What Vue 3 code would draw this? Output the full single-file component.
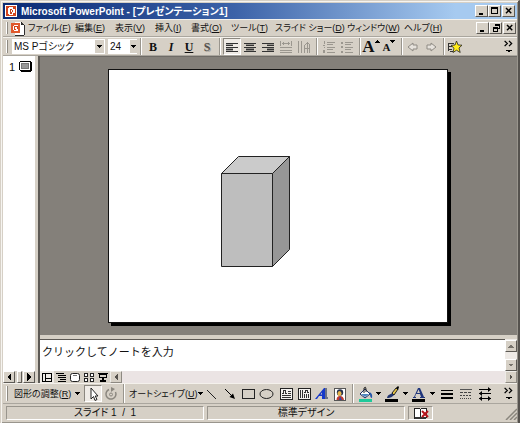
<script setup>
import { h, ref } from 'vue'

const art = {
  logo: '<path d="M1 1h13v13H1z" fill="#fff"/><path d="M2 2h11v11H2z" fill="#d2451e"/><path d="M5 3h5v2h2v5h-2v2H5v-1H4V4h1z" fill="#fff"/><path d="M6 5h3v1h1v3H8v2H6z" fill="#c2401c"/><path d="M7 6h2v2H7z" fill="#fff"/>',
  doc: '<path d="M5 1h7l3 3v11H5z" fill="#fff"/><path d="M12 1l3 3v11H5M12 1v3h3" fill="none" stroke="#222"/><path d="M1 2h10v11H1z" fill="#e0592c"/><path d="M4 4h4v1h1v5H8v1H4v-1H3V5h1z" fill="#fff"/><path d="M4 5h4v4H6v1H4z" fill="#d2451e"/><path d="M5 6h2v2H5z" fill="#fff"/>',
  min: '<path d="M4 11h5v2H4z"/>',
  max: '<path d="M3 3h9v9H3zM4 5v6h7V5z" fill-rule="evenodd"/>',
  restore: '<path d="M6 3h7v6h-3v4H4V7h2zM7 5v2h3v1h2V5zM5 9v3h4V9z" fill-rule="evenodd"/>',
  close: '<path d="M4 4l7 7M11 4l-7 7" stroke="#000" stroke-width="2" shape-rendering="auto"/>',
  left: '<g fill="#333"><path d="M2 4h12v1H2zM2 6h7v1H2zM2 8h12v1H2zM2 10h7v1H2zM2 12h12v1H2z"/><path d="M2 5h7v1H2zM2 9h7v1H2zM2 11h7v1H2z" opacity=".4"/></g>',
  center: '<g fill="#333"><path d="M2 4h12v1H2zM4 6h8v1H4zM2 8h12v1H2zM4 10h8v1H4zM2 12h12v1H2z"/><path d="M4 5h8v1H4zM4 9h8v1H4zM4 11h8v1H4z" opacity=".4"/></g>',
  right: '<g fill="#333"><path d="M2 4h12v1H2zM7 6h7v1H7zM2 8h12v1H2zM7 10h7v1H7zM2 12h12v1H2z"/><path d="M7 5h7v1H7zM7 9h7v1H7zM7 11h7v1H7z" opacity=".4"/></g>',
  spread: '<g fill="#9b978f"><path d="M2 2h1v5H2zM13 2h1v5h-1zM4 4h8v1H4zM5 3h1v3H5zM10 3h1v3h-1zM2 8h12v1H2zM2 11h12v1H2zM2 13h12v1H2z"/></g>',
  vertical: '<g fill="#9b978f"><path d="M2 2h1v12H2zM5 2h1v12H5zM8 6h1v8H8zM11 3h1v11h-1zM9 5h1v1H9zM13 5h1v9h-1zM10 4h3v1h-3zM8 9h6v1H8z"/></g>',
  numbers: '<g fill="#9b978f"><path d="M3 2h1v3H3zM2 6h2v1H2zM3 8h1v1H3zM2 11h2v3H2zM6 3h8v1H6zM6 5h6v1H6zM6 8h8v1H6zM6 10h6v1H6zM6 13h8v1H6z"/></g>',
  bullets: '<g fill="#9b978f"><path d="M2 3h2v2H2zM2 7h2v2H2zM2 12h2v2H2zM6 3h8v1H6zM6 5h6v1H6zM6 8h8v1H6zM6 10h6v1H6zM6 13h8v1H6z"/></g>',
  back: '<path d="M3 8l5-4v2h4v4H8v2z" fill="#e6e2dc" stroke="#8f8b84" shape-rendering="auto"/>',
  next: '<path d="M13 8L8 4v2H4v4h4v2z" fill="#e6e2dc" stroke="#8f8b84" shape-rendering="auto"/>',
  star: '<path d="M1 4h6M1 4v8M1 7h5M1 10h4M3 12h3" stroke="#333"/><path d="M9.500 2l1.600 4 3.900.200-3 2.800 1.200 4.500-3.700-2.300L6 13.500l1-4.300-3-2.800 4-.400z" fill="#ffec1a" stroke="#222" stroke-width=".8" shape-rendering="auto"/>',
  cursor: '<path d="M6 2v11l2.500-2.500L10 14.500l2-1-1.800-3.500H13z" fill="#fff" stroke="#222" shape-rendering="auto"/>',
  rotate: '<g shape-rendering="auto" fill="none" stroke="#8b877f"><path d="M6 3.500a5 5 0 1 0 6.500 2.500" stroke-width="1.500"/><path d="M8 1l4 2-4 3z" fill="#8b877f" stroke="none"/><circle cx="8" cy="8.500" r="1.500"/></g>',
  line: '<path d="M3 4l9 9" stroke="#222" shape-rendering="auto"/>',
  arrow: '<g shape-rendering="auto"><path d="M3 3l8 8" stroke="#000"/><path d="M13 13L7.500 11 11 7.500z"/></g>',
  rect: '<path d="M2.500 3.500h12v9h-12z" fill="none" stroke="#222"/>',
  oval: '<ellipse cx="8.500" cy="8" rx="6.500" ry="4.500" fill="none" stroke="#222" shape-rendering="auto"/>',
  text: '<path d="M2.500 2.500h12v11h-12z" fill="#f4f2ef" stroke="#222"/><path d="M4 7.500h1l1-3h1l1 3h1M10 5.500h3M10 7.500h3M4 9.500h9M4 11.500h9" stroke="#333" fill="none"/>',
  vtext: '<path d="M2.500 2.500h12v11h-12z" fill="#f4f2ef" stroke="#222"/><path d="M4.500 4v8M6.500 4v8M8.500 8v4M10.500 8v4M12.500 8v4M8 6.500h1l1-2h1l1 2h1" stroke="#333" fill="none"/>',
  wordart: '<g shape-rendering="auto"><path d="M1 13L10 2h1v11H8v-3H5l-2 3zM6.500 8.500H8V6.500z" fill="#1739c9"/><path d="M11 2h2v9h1v2h-3z" fill="#6c7284"/></g>',
  clip: '<path d="M2.500 2.500h11v12h-11z" fill="#fff" stroke="#555"/><g shape-rendering="auto"><circle cx="8" cy="6.500" r="3.200" fill="#25304d"/><ellipse cx="7.500" cy="7.500" rx="2" ry="2.500" fill="#e8b54a"/><path d="M4.500 14q0-4 3.500-4t4 4z" fill="#c23b2e"/><path d="M8 10l2 4H7z" fill="#3444a6"/></g>',
  fill: '<path d="M2 13h13v3H2z" fill="#20c99a"/><g shape-rendering="auto"><path d="M3 8l5-5 5 5-5 4z" fill="#fff" stroke="#1d2c62"/><path d="M4 8h8l-4 3z" fill="#4c86bd"/><path d="M7 7V2q2-2 2 1v3" fill="none" stroke="#222"/><path d="M12 6q4 1 3 6-2 0-2-4z" fill="#2455a8"/></g>',
  pen: '<path d="M1 13h13v3H1z"/><g shape-rendering="auto"><path d="M3 12c1-4 3-3 5-5l2 2c-2 2-3 3-7 3" fill="#20346e"/><path d="M8 7l4-5 2 1-4 6z" fill="#e8c546" stroke="#222"/><path d="M12 2l2-2 1 1-1 3z"/></g>',
  font: '<path d="M1 13h13v3H1z"/><path d="M2 11h1l4-9h2l4 9h1v1H9v-1h1l-1-3H5l-1 3h1v1H2zM6 7h3L7.500 3.500z" fill="#20367c" shape-rendering="auto"/>',
  weight: '<path d="M2 4h12v1H2zM2 7h12v2H2zM2 11h12v2H2z"/>',
  dash: '<path d="M2 3.500h12" stroke="#555"/><path d="M2 6.500h12" stroke="#444" stroke-dasharray="3 1"/><path d="M2 9.500h12" stroke="#444" stroke-dasharray="2 1"/><path d="M2 12.500h12" stroke="#444" stroke-dasharray="1 1"/>',
  arrows: '<path d="M2 3h12v1H2zM2 7h12v1H2zM2 12h12v1H2z"/><path d="M11 1l3 2.500L11 6zM5 5L2 7.500 5 10zM5 10l-3 2.500L5 15zM11 10l3 2.500-3 2.500z" shape-rendering="auto"/>',
  more: '<path d="M3 1l3 3-3 3M8 1l3 3-3 3" fill="none" stroke="#000" stroke-width="1.500" shape-rendering="auto"/><path d="M5 11h6v1h-1v1H9v1H7v-1H6v-1H5z"/>',
  normal: '<path d="M1 1h10v9H1zM2 2v7h2V2zM5 2v4h5V2zM5 7v2h5V7z" fill-rule="evenodd"/>',
  outline: '<path d="M1 1h8v1H1zM3 3h8v1H3zM3 5h8v1H3zM5 7h6v1H5zM3 9h8v1H3z"/>',
  slide: '<rect x="1.500" y="1.500" width="9" height="8" rx="2" fill="#fff" stroke="#222" shape-rendering="auto"/><path d="M4 3h4v1H4z" fill="#777"/>',
  sorter: '<path d="M1.500 1.500h3v3h-3zM7.500 1.500h3v3h-3zM1.500 6.500h3v3h-3zM7.500 6.500h3v3h-3z" fill="#fff" stroke="#222"/>',
  show: '<path d="M1 1h10v1H1zM2 2h8v4H2zM3 3v2h6V3zM5 6h2v2h2v2H3V8h2z" fill-rule="evenodd"/>',
  thumb: '<path d="M2 2h12v1h1v10h-1v1H3v-1H2v-1H1V3h1z"/><path d="M2 3h11v9H2z" fill="#fff"/><path d="M3 4h9v7H3z" fill="#777"/><path d="M4 5h7v5H4z" fill="#999"/>',
  aleft: '<path d="M10 4v8L6 8z"/>',
  aright: '<path d="M6 4v8l4-4z"/>',
  aup: '<path d="M4 10h8L8 6z" fill="#77736c"/>',
  adown: '<path d="M4 6h8l-4 4z" fill="#77736c"/>',
  drop: '<path d="M0 0h5v1H4v1H3v1H2V2H1V1H0z"/>',
  tup: '<path d="M0 3h5V2H4V1H3V0H2v1H1v1H0z"/>',
  book: '<path d="M1.500 3.500h5l1 1V13h-6zM8 4l1-1h4v9H8" fill="#fff" stroke="#222"/><path d="M2 12h11v2H2z" fill="#333"/><path d="M9 6l6 6M15 6l-6 6" stroke="#b8141c" stroke-width="2" shape-rendering="auto"/>'
}

const boxes = { drop: [5, 3], tup: [5, 3], normal: [12, 11], outline: [12, 11], slide: [12, 11], sorter: [12, 11], show: [12, 11] }

const Icon = (p) => {
  const [w, t] = boxes[p.name] || [16, 16]
  return h('svg', {
    class: 'icon', viewBox: `0 0 ${w} ${t}`, width: p.size || w, height: p.size || t,
    'shape-rendering': 'crispEdges', 'aria-hidden': 'true', innerHTML: art[p.name]
  })
}
Icon.props = ['name', 'size']

const menus = ['ファイル(F)', '編集(E)', '表示(V)', '挿入(I)', '書式(O)', 'ツール(T)', 'スライド ショー(D)', 'ウィンドウ(W)', 'ヘルプ(H)']
  .map((m) => ({ text: m.slice(0, -3), key: m.slice(-2, -1) }))
const aligns = [['left', '左揃え'], ['center', '中央揃え'], ['right', '右揃え'], ['spread', '均等割り付け'], ['vertical', '文字方向']]
const views = [['normal', '標準'], ['outline', 'アウトライン'], ['slide', 'スライド'], ['sorter', '一覧'], ['show', 'スライド ショー']]
const shapes = [['line', '直線'], ['arrow', '矢印'], ['rect', '四角形'], ['oval', '楕円']]
const objects = [['text', 'テキスト'], ['vtext', '縦書きテキスト'], ['wordart', 'ワードアート'], ['clip', 'クリップアート']]
const colors = [['fill', '塗りつぶしの色'], ['pen', '線の色'], ['font', 'フォントの色']]
const strokes = [['weight', '線のスタイル'], ['dash', '点線のスタイル'], ['arrows', '矢印のスタイル']]
const align = ref('left')
const view = ref('normal')
const notes = ref('クリックしてノートを入力')
</script>

<template>
  <div class="window">
    <header class="title">
      <Icon name="logo" :size="15" />
      <h1>Microsoft PowerPoint - [プレゼンテーション1]</h1>
      <div class="controls">
        <button v-for="c in ['min', 'max', 'close']" :key="c" class="raised" :class="c" :aria-label="c"><Icon :name="c" :size="12" /></button>
      </div>
    </header>

    <nav class="bar menubar">
      <i class="grip"></i>
      <Icon name="doc" :size="15" />
      <div class="menus">
        <button v-for="m in menus" :key="m.key">{{ m.text }}(<u>{{ m.key }}</u>)</button>
      </div>
      <div class="controls">
        <button v-for="c in ['min', 'restore', 'close']" :key="c" class="raised" :class="c" :aria-label="c"><Icon :name="c" :size="12" /></button>
      </div>
    </nav>

    <div class="bar format">
      <i class="grip"></i>
      <label class="combo face"><select aria-label="フォント"><option>MS Pゴシック</option></select><span><Icon name="drop" /></span></label>
      <label class="combo size"><select aria-label="フォント サイズ"><option>24</option></select><span><Icon name="drop" /></span></label>
      <i class="sep"></i>
      <button class="tool letter"><b>B</b></button>
      <button class="tool letter"><em>I</em></button>
      <button class="tool letter"><u>U</u></button>
      <button class="tool letter shade"><b>S</b></button>
      <i class="sep"></i>
      <button v-for="[n, t] in aligns" :key="n" class="tool" :class="{ pressed: align === n }" :aria-label="t" @click="align = n"><Icon :name="n" /></button>
      <i class="sep"></i>
      <button class="tool" aria-label="段落番号"><Icon name="numbers" /></button>
      <button class="tool" aria-label="箇条書き"><Icon name="bullets" /></button>
      <i class="sep tight"></i>
      <button class="tool letter grow" aria-label="拡大"><b>A</b><Icon name="tup" /></button>
      <button class="tool letter shrink" aria-label="縮小"><b>A</b><Icon name="drop" /></button>
      <i class="sep tight"></i>
      <button class="tool" aria-label="レベル上げ"><Icon name="back" /></button>
      <button class="tool" aria-label="レベル下げ"><Icon name="next" /></button>
      <i class="sep tight"></i>
      <button class="tool" aria-label="アニメーション"><Icon name="star" /></button>
      <button class="more" aria-label="その他"><Icon name="more" :size="14" /></button>
    </div>

    <main class="work">
      <aside class="outline">
        <div class="entry">1<Icon name="thumb" :size="15" /></div>
        <div class="hscroll">
          <button class="raised" aria-label="左"><Icon name="aleft" /></button>
          <i class="raised handle"></i>
          <button class="raised" aria-label="右"><Icon name="aright" /></button>
        </div>
      </aside>
      <section class="editor">
        <div class="canvas">
          <div class="page">
            <svg viewBox="0 0 338 252" role="img" aria-label="直方体">
              <g stroke="#222" stroke-width="1" stroke-linejoin="round">
                <path d="M112.500 103.500l17-17h51l-17 17z" fill="#cbcbcb" />
                <path d="M163.500 103.500l17-17v93l-17 17z" fill="#979797" />
                <path d="M112.500 103.500h51v93h-51z" fill="#bebebe" />
              </g>
            </svg>
          </div>
        </div>
        <div class="notes">
          <textarea v-model="notes" aria-label="ノート" rows="1" spellcheck="false"></textarea>
          <div class="vscroll">
            <button class="raised" aria-label="上"><Icon name="aup" :size="12" /></button>
            <button class="raised" aria-label="下"><Icon name="adown" :size="12" /></button>
          </div>
        </div>
        <div class="views">
          <button v-for="[n, t] in views" :key="n" class="view" :class="{ current: view === n }" :aria-label="t" @click="view = n"><Icon :name="n" /></button>
          <button class="raised dim" aria-label="左"><Icon name="aleft" :size="12" /></button>
          <i class="track"></i>
          <button class="raised dim" aria-label="右"><Icon name="aright" :size="12" /></button>
        </div>
      </section>
    </main>

    <div class="bar draw">
      <i class="grip"></i>
      <button class="menu adjust"><span>図形の調整(<u>R</u>)</span><Icon name="drop" /></button>
      <button class="tool pressed" aria-label="選択"><Icon name="cursor" /></button>
      <button class="tool" aria-label="回転"><Icon name="rotate" /></button>
      <i class="sep"></i>
      <button class="menu auto"><span>オートシェイプ(<u>U</u>)</span><Icon name="drop" /></button>
      <div class="group"><button v-for="[n, t] in shapes" :key="n" class="tool" :aria-label="t"><Icon :name="n" /></button></div>
      <div class="group"><button v-for="[n, t] in objects" :key="n" class="tool" :aria-label="t"><Icon :name="n" /></button></div>
      <i class="sep"></i>
      <template v-for="[n, t] in colors" :key="n">
        <button class="tool" :aria-label="t"><Icon :name="n" /></button>
        <button class="pick" :aria-label="t + 'を選択'"><Icon name="drop" /></button>
      </template>
      <button v-for="[n, t] in strokes" :key="n" class="tool wide" :aria-label="t"><Icon :name="n" /></button>
      <button class="more" aria-label="その他"><Icon name="more" :size="14" /></button>
    </div>

    <footer class="status">
      <span class="cell">スライド 1&nbsp; /&nbsp; 1</span>
      <span class="cell">標準デザイン</span>
      <span class="cell spell"><Icon name="book" :size="16" /></span>
      <svg class="resize" viewBox="0 0 12 12" width="12" height="12"><path d="M1 12L12 1M5 12l7-7M9 12l3-3" stroke="#8a867e" stroke-width="1.500" /></svg>
    </footer>
  </div>
</template>

<style>
body { margin: 0; background: #d6d0c6; }
</style>

<style scoped>
* { box-sizing: border-box; }
.window {
  min-height: 100vh; display: flex; flex-direction: column;
  padding: 2px 1px 1px 2px; background: #d6d0c6; color: #111;
  border: 1px solid #d6d0c6; border-right: 2px solid #55524e; border-bottom: 2px solid #55524e;
  box-shadow: inset 1px 1px #f6f4f0, inset -1px -1px #99958d;
  font: 10px/12px "Liberation Sans", "Noto Sans CJK JP", sans-serif;
  font-feature-settings: "palt";
}
button { margin: 0; padding: 0; border: 0; background: none; color: inherit; font: inherit; font-feature-settings: inherit; white-space: nowrap; }
.icon { display: block; flex: none; }
.title { height: 16px; display: flex; align-items: center; gap: 2px; padding: 0 1px; color: #fff; background: linear-gradient(90deg, #0a2a74, #3c62a8 45%, #a6caf0 88%); }
h1 { flex: 1; margin: 0; font: bold 10px/15px "Liberation Sans", "Noto Sans CJK JP", sans-serif; font-feature-settings: "palt"; white-space: nowrap; }
.controls { display: flex; margin-left: auto; padding-right: 1px; }
.controls .raised { width: 13px; height: 12px; }
.controls .close { margin-left: 1px; }
.raised { display: flex; align-items: center; justify-content: center; background: #d6d0c6; border: 1px solid #fff; border-right-color: #5d5a55; border-bottom-color: #5d5a55; overflow: hidden; }
.bar { display: flex; align-items: center; padding-left: 3px; border-top: 1px solid #f4f1ec; border-bottom: 1px solid #aaa69e; }
.grip { flex: none; align-self: stretch; width: 2px; margin: 2px 4px 2px 0; border-left: 1px solid #fff; border-right: 1px solid #8d8981; }
.menubar { height: 18px; }
.menubar .grip { margin-right: 2px; }
.menus { display: grid; grid-template-columns: 47px 40px 40px 36px 40px 44px 72px 57px 40px; margin-left: 3px; }
.menus button { text-align: left; font-size: 9px; }
.format { height: 19px; }
.combo { display: grid; align-items: center; height: 15px; background: #fff; }
.combo > * { grid-area: 1 / 1; }
.combo select { appearance: none; width: 100%; height: 15px; padding: 0 0 0 2px; border: 0; background: none; color: inherit; font: 10px/15px "Liberation Sans", "Noto Sans CJK JP", sans-serif; font-feature-settings: "palt"; }
.combo span { justify-self: end; width: 9px; height: 13px; margin-right: 1px; display: grid; place-items: center; background: #d6d0c6; pointer-events: none; }
.face { width: 93px; margin-right: 3px; }
.size { width: 29px; }
.size span { width: 7px; margin-right: 0; }
.sep { flex: none; align-self: stretch; width: 7px; background: linear-gradient(90deg, transparent 3px, #99958d 3px 4px, #fff 4px 5px, transparent 5px); }
.tight { width: 6px; }
.tool { flex: none; display: flex; align-items: center; justify-content: center; width: 18px; height: 17px; }
.wide { width: 19px; }
.pressed { background: #efebe6; border: 1px solid #8b877f; border-right-color: #fff; border-bottom-color: #fff; }
.letter { font: 12px/16px "Liberation Serif", serif; }
.letter em, .letter u { font-weight: bold; }
.shade { color: #55524e; text-shadow: 1px 1px #aaa69e; }
.grow { font-size: 17px; }
.shrink { font-size: 11px; }
.letter .icon { align-self: flex-start; margin-top: 2px; }
.more { margin-left: auto; padding-right: 1px; }
.work { flex: 1; display: flex; }
.outline { flex: none; width: 32px; display: flex; flex-direction: column; justify-content: space-between; background: #fff; }
.entry { display: flex; align-items: center; gap: 3px; padding: 3px 0 0 6px; font-size: 11px; }
.hscroll { display: flex; justify-content: space-between; height: 12px; background: #d6d0c6; }
.hscroll button { width: 12px; }
.handle { width: 5px; }
.editor { flex: 1; min-width: 0; display: flex; flex-direction: column; margin-left: 3px; border-left: 2px solid #5c5954; }
.canvas { flex: 1; display: flex; padding: 12px 69px 12px 68px; background: #84807a; border-top: 1px solid #6e6b66; }
.page { flex: 1; border: 1px solid #111; background: #fff; box-shadow: 3px 3px #000; }
.page svg { display: block; width: 100%; }
.notes { display: flex; height: 36px; border-top: 4px solid #d6d0c6; background: #fff; box-shadow: inset 0 1px #5c5954; }
textarea { flex: 1; margin: 1px 0 0; padding: 4px 2px; border: 0; outline: 0; resize: none; overflow: hidden; background: none; color: #111; font: 11px/14px "Noto Sans CJK JP", sans-serif; font-feature-settings: normal; }
.vscroll { width: 12px; display: flex; flex-direction: column; justify-content: space-between; padding-top: 1px; background: #eeeae6; }
.vscroll button { height: 12px; }
.views { display: flex; height: 12px; background: #d6d0c6; }
.view { width: 14px; display: flex; align-items: center; justify-content: center; }
.current { background: #efebe6; }
.views .raised { width: 12px; }
.dim { opacity: .6; }
.track { flex: 1; background: #ebe4e4; }
.draw { height: 21px; }
.menu { display: flex; align-items: center; justify-content: space-between; height: 17px; padding-right: 2px; }
.adjust { width: 70px; margin-right: 2px; padding-left: 2px; font-size: 9px; }
.auto { width: 76px; padding-left: 2px; font-size: 9px; }
.group { display: flex; }
.group + .group { margin-left: 2px; }
.pick { flex: none; width: 9px; display: flex; justify-content: center; }
.status { display: flex; gap: 3px; height: 18px; padding: 2px 0 2px 3px; }
.cell { width: 198px; display: flex; align-items: center; justify-content: center; border: 1px solid #99958d; border-right-color: #fff; border-bottom-color: #fff; }
.spell { width: 25px; }
.resize { margin: 2px 0 0 auto; }
</style>
